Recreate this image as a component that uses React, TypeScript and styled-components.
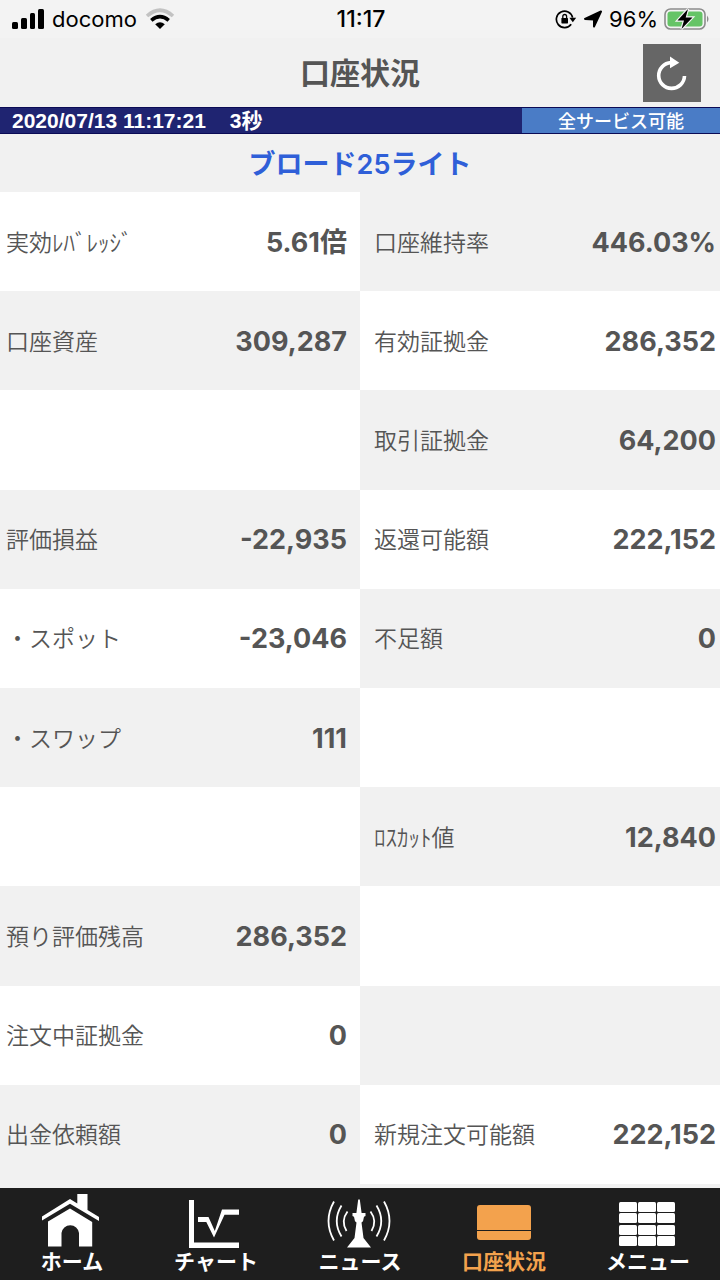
import React from "react";
import styled, { createGlobalStyle } from "styled-components";

const GlobalStyle = createGlobalStyle`
  *, *::before, *::after { box-sizing: border-box; }
  body {
    margin: 0;
    background: #f1f1f1;
    color: #555;
    font-family: Inter, "Noto Sans CJK JP", sans-serif;
  }
`;

const Screen = styled.div`
  display: flex;
  flex-direction: column;
  min-height: 100vh;
  background: #f1f1f1;
`;

const StatusBar = styled.div`
  display: grid;
  grid-template-columns: 1fr auto 1fr;
  align-items: center;
  height: 38px;
  padding: 0 10px 0 12px;
  background: #f3f3f3;
  color: #000;
  font-size: 22px;
  line-height: 38px;
`;

const StatusGroup = styled.div<{ $end?: boolean }>`
  display: flex;
  align-items: center;
  justify-content: ${(p) => (p.$end ? "flex-end" : "flex-start")};
  gap: ${(p) => (p.$end ? "6px" : "8px")};
`;

const Clock = styled.time`
  font-size: 23px;
  font-weight: 500;
`;

const Header = styled.header`
  display: grid;
  grid-template-columns: 1fr auto 1fr;
  align-items: center;
  height: 69px;
  padding: 0 19px;
`;

const Title = styled.h1`
  grid-column: 2;
  margin: 0;
  font-size: 30px;
  line-height: 44px;
  font-weight: 700;
`;

const RefreshButton = styled.button`
  display: flex;
  justify-self: end;
  width: 58px;
  height: 58px;
  padding: 0;
  border: 0;
  background: #666;
  cursor: pointer;
`;

const ServiceBar = styled.div`
  display: flex;
  height: 27px;
  border: solid #0b0b55;
  border-width: 1px 0;
  background: #1f2471;
  color: #fff;
  font-weight: 700;
  line-height: 25px;
`;

const ServerTime = styled.div`
  display: flex;
  flex: 1;
  gap: 24px;
  padding-left: 12px;
  font-family: "Liberation Sans", "Noto Sans CJK JP", sans-serif;
  font-size: 21px;
`;

const ServiceState = styled.div`
  width: 28%;
  max-width: 198px;
  background: #4a7cc6;
  font-size: 18px;
  font-weight: 500;
  line-height: 27px;
  text-align: center;
`;

const CourseName = styled.h2`
  margin: 0;
  padding-top: 4px;
  color: #2f5fd8;
  font-size: 27px;
  line-height: 54px;
  font-weight: 600;
  text-align: center;
`;

const Board = styled.main`
  display: grid;
  grid-template-columns: 1fr 1fr;
  flex: 1;
  margin-bottom: 4px;
`;

const Column = styled.dl<{ $side: "left" | "right" }>`
  display: grid;
  grid-auto-rows: minmax(64px, 1fr);
  margin: 0;

  & > div {
    padding: ${(p) => (p.$side === "left" ? "0 13px 0 6px" : "0 4px 0 14px")};
  }
  & > div:nth-child(${(p) => (p.$side === "left" ? "odd" : "even")}) {
    background: #fff;
  }
`;

const Row = styled.div`
  display: flex;
  align-items: center;
  justify-content: space-between;
  white-space: nowrap;
`;

const Label = styled.dt`
  padding-bottom: 2px;
  font-family: "Noto Sans CJK JP", sans-serif;
  font-size: 23px;
  line-height: 34px;
  font-weight: 350;
`;

const Value = styled.dd`
  margin: 0;
  padding-top: 2px;
  font-size: 27px;
  line-height: 34px;
  font-weight: 700;
`;

const TabBar = styled.nav`
  display: grid;
  grid-template-columns: repeat(5, 1fr);
  height: 92px;
  background: #1e1e1e;
`;

const Tab = styled.a<{ $active?: boolean }>`
  display: flex;
  flex-direction: column;
  align-items: center;
  padding-top: 4px;
  color: ${(p) => (p.$active ? "#f3a24d" : "#fff")};
  font-size: 21px;
  line-height: 28px;
  font-weight: 700;
  text-decoration: none;
  white-space: nowrap;
`;

const SignalIcon = () => (
  <svg width="32" height="22" viewBox="0 0 32 22" aria-hidden="true">
    <rect x="0" y="14" width="6" height="7" rx="1.5" />
    <rect x="9" y="10" width="6" height="11" rx="1.5" />
    <rect x="18" y="5" width="5" height="16" rx="1.5" />
    <rect x="26" y="1" width="6" height="20" rx="1.5" />
  </svg>
);

const WifiIcon = () => (
  <svg width="30" height="22" viewBox="0 0 30 22" fill="none" aria-hidden="true">
    <path d="M2 8 Q15 -3.5 28 8" stroke="#c2c2c2" strokeWidth="3.6" />
    <path d="M6.3 12.4 Q15 5 23.7 12.4" stroke="#000" strokeWidth="3.6" />
    <path d="M10.2 16.2 Q15 12.4 19.8 16.2 L15 21Z" fill="#000" />
  </svg>
);

const RotationLockIcon = () => (
  <svg width="22" height="20" viewBox="0 0 22 20" fill="none" aria-hidden="true">
    <path d="M16.2 15.2A8.2 8.2 0 1 1 17.6 8.6" stroke="#000" strokeWidth="1.7" />
    <path d="M14.4 8.8H21.2L17.8 13.2Z" fill="#000" />
    <rect x="6.4" y="9" width="6.6" height="5.4" rx="0.6" fill="#000" />
    <path d="M7.8 9.4V7.4a1.9 1.9 0 0 1 3.8 0V9.4" stroke="#000" strokeWidth="1.3" />
  </svg>
);

const LocationIcon = () => (
  <svg width="20" height="18" viewBox="0 0 20 18" aria-hidden="true">
    <path d="M18 1.5 11 16.5V9.4L2 8.9Z" stroke="#000" strokeWidth="2" strokeLinejoin="round" />
  </svg>
);

const BatteryIcon = () => (
  <svg width="46" height="24" viewBox="0 0 46 24" aria-hidden="true">
    <rect x="1" y="2" width="40" height="20" rx="5.5" fill="none" stroke="#8c8c8c" strokeWidth="1.6" />
    <rect x="3.5" y="4.5" width="35" height="15" rx="3" fill="#65c466" />
    <path d="M43 8.5q3 3.5 0 7z" fill="#8c8c8c" />
    <path d="M24 2 13.5 13.5H20L17.5 22 28.5 10.5H21.7Z" stroke="#f3f3f3" strokeWidth="2.4" paintOrder="stroke" />
  </svg>
);

const RefreshIcon = () => (
  <svg width="58" height="58" viewBox="0 0 58 58" fill="none" aria-hidden="true">
    <path d="M41.5 32A12.9 12.9 0 1 1 28 18.6" stroke="#fff" strokeWidth="3.6" />
    <path d="M27 12.5 36.3 18.7 27 24.3Z" fill="#fff" />
  </svg>
);

const TabIcon = ({ children }: { children: React.ReactNode }) => (
  <svg width="72" height="56" viewBox="0 0 72 56" fill="currentColor" aria-hidden="true">
    {children}
  </svg>
);

const HomeIcon = () => (
  <TabIcon>
    <path d="M6 24.5 34 7 41.3 11.6V2H51.5V18L63 25V29L34 11.8 6 28.5Z" />
    <path d="M12 29.5 34 16.5 56.2 30V54.5H43V41A8.8 8.8 0 0 0 25.5 41V54.5H12Z" />
  </TabIcon>
);

const ChartIcon = () => (
  <TabIcon>
    <path d="M9 8H14V50.5H59V56H9Z" />
    <path d="M18 25H28.5L34.8 39 42 17.5H59V22.7H44.5L34 45.5 26.3 30H18Z" />
  </TabIcon>
);

const NewsIcon = () => (
  <TabIcon>
    <path d="M34.2 7.5H35.8L37.6 21H41.5V24L40 24.8 39 29.3 37.5 30.5 39.5 46 47 55.5H23L30.5 46 32.5 30.5 31 29.3 30 24.8 28.5 24V21H32.4Z" />
    <g fill="none" stroke="currentColor" strokeWidth="1.8">
      <path d="M23.5 19.5Q16.5 29 22.5 39" />
      <path d="M17.5 13.5Q8 29 17.5 44.5" />
      <path d="M10 9.5Q-1 29 10 48.5" />
      <path d="M46.5 19.5Q53.5 29 47.5 39" />
      <path d="M52.5 13.5Q62 29 52.5 44.5" />
      <path d="M60 9.5Q71 29 60 48.5" />
    </g>
  </TabIcon>
);

const AccountIcon = () => (
  <TabIcon>
    <path d="M12 13H60Q63 13 63 16V38H9V16Q9 13 12 13Z" />
    <path d="M9 39H63V45Q63 48 60 48H12Q9 48 9 45Z" />
  </TabIcon>
);

const MenuIcon = () => (
  <TabIcon>
    {[10, 21, 33, 44].map((y) =>
      [7, 26, 45].map((x) => (
        <rect key={`${x}-${y}`} x={x} y={y} width="18" height="10" rx="1.5" />
      ))
    )}
  </TabIcon>
);

type Entry = [label: string, value: string] | null;

const leftEntries: Entry[] = [
  ["実効ﾚﾊﾞﾚｯｼﾞ", "5.61倍"],
  ["口座資産", "309,287"],
  null,
  ["評価損益", "-22,935"],
  ["・スポット", "-23,046"],
  ["・スワップ", "111"],
  null,
  ["預り評価残高", "286,352"],
  ["注文中証拠金", "0"],
  ["出金依頼額", "0"],
];

const rightEntries: Entry[] = [
  ["口座維持率", "446.03%"],
  ["有効証拠金", "286,352"],
  ["取引証拠金", "64,200"],
  ["返還可能額", "222,152"],
  ["不足額", "0"],
  null,
  ["ﾛｽｶｯﾄ値", "12,840"],
  null,
  null,
  ["新規注文可能額", "222,152"],
];

const tabs = [
  { name: "ホーム", Icon: HomeIcon },
  { name: "チャート", Icon: ChartIcon },
  { name: "ニュース", Icon: NewsIcon },
  { name: "口座状況", Icon: AccountIcon, active: true },
  { name: "メニュー", Icon: MenuIcon },
];

const EntryColumn = ({ side, entries }: { side: "left" | "right"; entries: Entry[] }) => (
  <Column $side={side}>
    {entries.map((entry, i) => (
      <Row key={i}>
        {entry && (
          <>
            <Label>{entry[0]}</Label>
            <Value>{entry[1]}</Value>
          </>
        )}
      </Row>
    ))}
  </Column>
);

export default function App() {
  return (
    <Screen>
      <GlobalStyle />
      <StatusBar>
        <StatusGroup>
          <SignalIcon />
          <span>docomo</span>
          <WifiIcon />
        </StatusGroup>
        <Clock>11:17</Clock>
        <StatusGroup $end>
          <RotationLockIcon />
          <LocationIcon />
          <span>96%</span>
          <BatteryIcon />
        </StatusGroup>
      </StatusBar>
      <Header>
        <Title>口座状況</Title>
        <RefreshButton type="button" aria-label="更新">
          <RefreshIcon />
        </RefreshButton>
      </Header>
      <ServiceBar>
        <ServerTime>
          <span>2020/07/13 11:17:21</span>
          <span>3秒</span>
        </ServerTime>
        <ServiceState>全サービス可能</ServiceState>
      </ServiceBar>
      <CourseName>ブロード25ライト</CourseName>
      <Board>
        <EntryColumn side="left" entries={leftEntries} />
        <EntryColumn side="right" entries={rightEntries} />
      </Board>
      <TabBar>
        {tabs.map(({ name, Icon, active }) => (
          <Tab key={name} href="#" $active={active} aria-current={active ? "page" : undefined}>
            <Icon />
            <span>{name}</span>
          </Tab>
        ))}
      </TabBar>
    </Screen>
  );
}
